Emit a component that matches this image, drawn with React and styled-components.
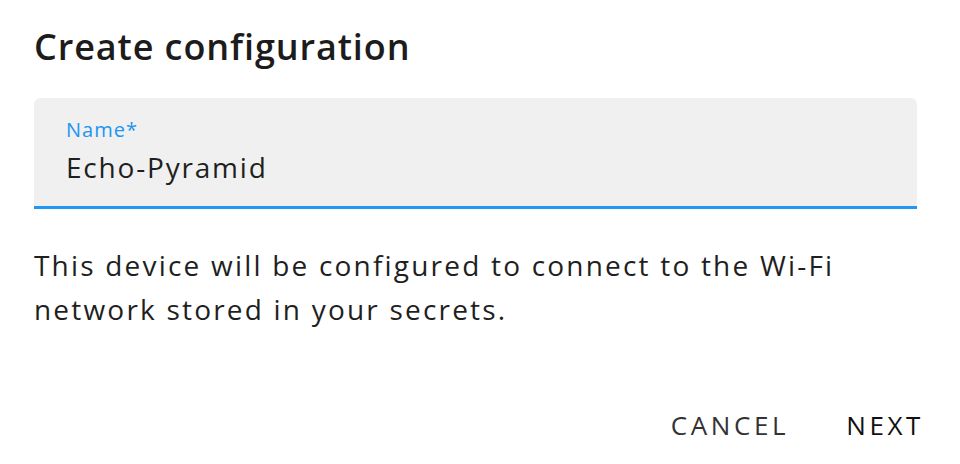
import React from "react";
import styled, { createGlobalStyle } from "styled-components";

const Global = createGlobalStyle`
  html, body { margin: 0; padding: 0; background: #fff; }
  body { font-family: "Open Sans", "Noto Sans", sans-serif; -webkit-font-smoothing: antialiased; }
  * { box-sizing: border-box; }
`;

const Dialog = styled.div`
  width: 960px;
  height: 464px;
  padding: 0 43px 0 34px;
  display: flex;
  flex-direction: column;
  color: #212121;
`;

const Title = styled.h2`
  margin: 0;
  padding-top: 23px;
  font-family: "Open Sans", sans-serif;
  font-size: 36px;
  line-height: 48px;
  font-weight: 600;
  letter-spacing: 0.9px;
  color: #1c1c1c;
`;

const Field = styled.label`
  margin-top: 27px;
  height: 111px;
  display: flex;
  flex-direction: column;
  padding: 18px 32px 0 32px;
  background: #f0f0f0;
  border-radius: 6px 6px 0 0;
  border-bottom: 3px solid #2196f3;
`;

const FieldLabel = styled.span`
  font-size: 20px;
  line-height: 28px;
  color: #2196f3;
  letter-spacing: 1px;
`;

const FieldValue = styled.span`
  margin-top: 4px;
  font-size: 28px;
  line-height: 38px;
  color: #1f1f1f;
  letter-spacing: 1.8px;
`;

const Body = styled.p`
  margin: 34px 0 0 0;
  font-size: 28px;
  line-height: 44px;
  letter-spacing: 2.2px;
  color: #1f1f1f;
`;

const Actions = styled.div`
  margin-top: auto;
  margin-bottom: 23px;
  margin-right: -7px;
  display: flex;
  justify-content: flex-end;
  gap: 57px;
`;

const Button = styled.button`
  border: none;
  background: none;
  padding: 0;
  font-family: inherit;
  font-size: 26px;
  line-height: 32px;
  font-weight: 500;
  letter-spacing: 3.6px;
  text-transform: uppercase;
  color: ${(p) => (p.$primary ? "#111" : "#333")};
  cursor: pointer;
`;

export default function App() {
  return (
    <>
      <Global />
      <Dialog>
        <Title>Create configuration</Title>
        <Field>
          <FieldLabel>Name*</FieldLabel>
          <FieldValue>Echo-Pyramid</FieldValue>
        </Field>
        <Body>
          This device will be configured to connect to the Wi-Fi network stored in your secrets.
        </Body>
        <Actions>
          <Button>Cancel</Button>
          <Button $primary>Next</Button>
        </Actions>
      </Dialog>
    </>
  );
}
